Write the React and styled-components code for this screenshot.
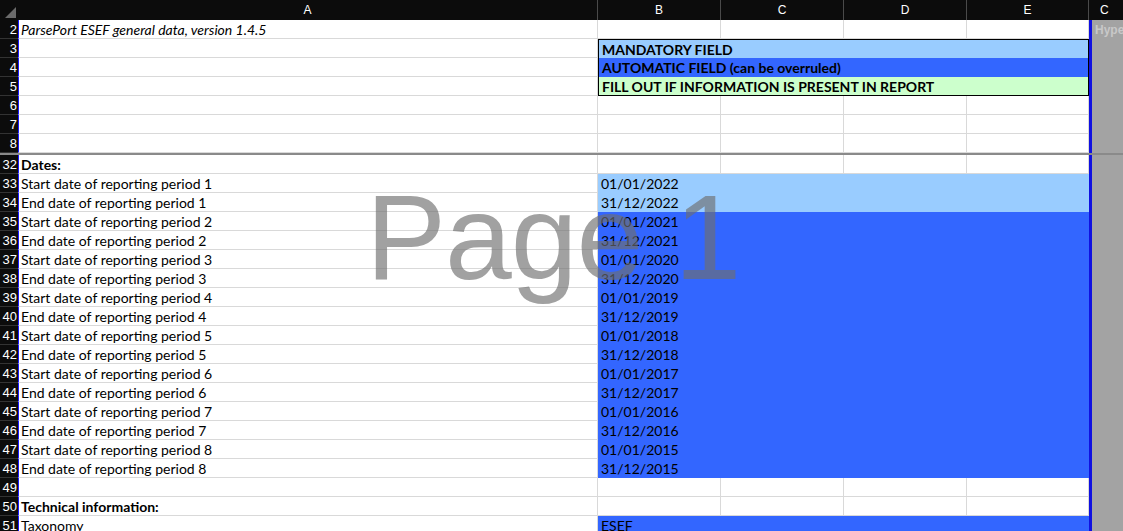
import React from "react";
import styled, { createGlobalStyle } from "styled-components";

const Global = createGlobalStyle`
  html, body { margin: 0; padding: 0; background: #fff; overflow: hidden; }
  body { font-family: Lato, "Open Sans", sans-serif; font-size: 14px; color: #000; }
`;

const Sheet = styled.div`position: relative; width: 1123px; height: 531px; overflow: hidden;`;
const Row = styled.div`
  display: flex; height: ${p => p.$h || 19}px;
  border-bottom: ${p => p.$break ? "2px double #8a8a8a" : "none"};
`;
const Corner = styled.div`
  width: 18px; height: 20px; background: #0c0c0c; position: relative; flex: none;
  &::after { content: ""; position: absolute; right: 2px; bottom: 2px;
    border-left: 11px solid transparent; border-bottom: 11px solid #6b6b6b; }
`;
const ColHead = styled.div`
  width: ${p => p.$w}px; flex: none; background: #0c0c0c; color: #fff;
  font-family: "Liberation Sans", sans-serif; font-size: 12px;
  display: flex; align-items: center; justify-content: center;
  border-right: 1px solid #4a4a4a; box-sizing: border-box; overflow: hidden;
`;
const RowHead = styled.div`
  width: 18px; flex: none; background: #0c0c0c; color: #fff; font-size: 13px;
  font-family: "Liberation Sans", sans-serif; display: flex; align-items: center;
  justify-content: flex-end; overflow: hidden; white-space: nowrap; padding-right: 1px;
  box-sizing: border-box; border-bottom: 1px solid #333;
`;
const CellA = styled.div`
  width: 580px; flex: none; box-sizing: border-box; padding-left: 2px;
  border-left: 1px solid #1a1aff; border-bottom: 1px solid #d9d9d9; border-right: 1px solid #d9d9d9;
  display: flex; align-items: center; white-space: nowrap;
  font-weight: ${p => p.$bold ? 700 : 400}; font-style: ${p => p.$italic ? "italic" : "normal"};
`;
const Cell = styled.div`
  width: ${p => p.$w}px; flex: none; box-sizing: border-box;
  border-bottom: 1px solid #d9d9d9; border-right: 1px solid #d9d9d9;
`;
const Fill = styled.div`
  width: 491px; flex: none; box-sizing: border-box; padding-left: 3px;
  background: ${p => p.$bg}; display: flex; align-items: center; white-space: nowrap;
  font-weight: ${p => p.$bold ? 700 : 400};
  border-left: ${p => p.$boxed ? "1px solid #000" : "none"};
  border-right: ${p => p.$boxed ? "1px solid #000" : "none"};
  border-top: ${p => p.$top ? "1px solid #000" : "none"};
  border-bottom: ${p => p.$boxed ? (p.$last ? "1px solid #000" : "none") : "1px solid " + p.$bg};
`;
const Edge = styled.div`width: 3px; flex: none; background: #1010e0;`;
const EdgeHead = styled.div`width: 3px; flex: none; background: #0c0c0c;`;
const Grey = styled.div`
  flex: 1; background: #a3a3a3; color: #c8c8c8; font-weight: 700; font-size: 12px;
  padding-left: 3px; display: flex; align-items: center; overflow: hidden;
  font-family: "Liberation Sans", sans-serif;
`;
const GreyHead = styled(ColHead)`flex: 1; width: auto; justify-content: flex-start; padding-left: 8px; border: none;`;
const Watermark = styled.div`
  position: absolute; left: 366px; top: 168px; font-family: "Liberation Sans", Arial, sans-serif;
  font-size: 120px; color: rgba(110,110,110,0.65); pointer-events: none; letter-spacing: -1px;
`;

const LB = "#99ccff", BL = "#3366ff", GR = "#ccffcc";

const rows = [
  { n: 2, a: "ParsePort ESEF general data, version 1.4.5", italic: true, greyText: "Hype" },
  { n: 3, fill: { bg: LB, t: "MANDATORY FIELD", bold: true, boxed: true, top: true } },
  { n: 4, fill: { bg: BL, t: "AUTOMATIC FIELD (can be overruled)", bold: true, boxed: true } },
  { n: 5, fill: { bg: GR, t: "FILL OUT IF INFORMATION IS PRESENT IN REPORT", bold: true, boxed: true, last: true } },
  { n: 6 }, { n: 7 }, { n: 8, brk: true },
  { n: 32, a: "Dates:", bold: true },
];
const dates = [];
for (let i = 1; i <= 8; i++) {
  const y = 2023 - i;
  dates.push({ a: `Start date of reporting period ${i}`, v: `01/01/${y}` });
  dates.push({ a: `End date of reporting period ${i}`, v: `31/12/${y}` });
}
dates.forEach((d, i) => rows.push({ n: 33 + i, a: d.a, fill: { bg: i < 2 ? LB : BL, t: d.v } }));
rows.push({ n: 49 }, { n: 50, a: "Technical information:", bold: true }, { n: 51, a: "Taxonomy", fill: { bg: BL, t: "ESEF" } });

export default function App() {
  return (
    <Sheet>
      <Global />
      <Row $h={20}>
        <Corner />
        <ColHead $w={580}>A</ColHead>
        <ColHead $w={123}>B</ColHead>
        <ColHead $w={123}>C</ColHead>
        <ColHead $w={123}>D</ColHead>
        <ColHead $w={122}>E</ColHead>
        <EdgeHead />
        <GreyHead>C</GreyHead>
      </Row>
      {rows.map(r => (
        <Row key={r.n} $break={r.brk}>
          <RowHead>{r.n}</RowHead>
          <CellA $bold={r.bold} $italic={r.italic}>{r.a}</CellA>
          {r.fill ? (
            <Fill $bg={r.fill.bg} $bold={r.fill.bold} $boxed={r.fill.boxed} $top={r.fill.top} $last={r.fill.last}>{r.fill.t}</Fill>
          ) : (
            <>
              <Cell $w={123} /><Cell $w={123} /><Cell $w={123} /><Cell $w={122} />
            </>
          )}
          <Edge />
          <Grey>{r.greyText}</Grey>
        </Row>
      ))}
      <Watermark>Page 1</Watermark>
    </Sheet>
  );
}
